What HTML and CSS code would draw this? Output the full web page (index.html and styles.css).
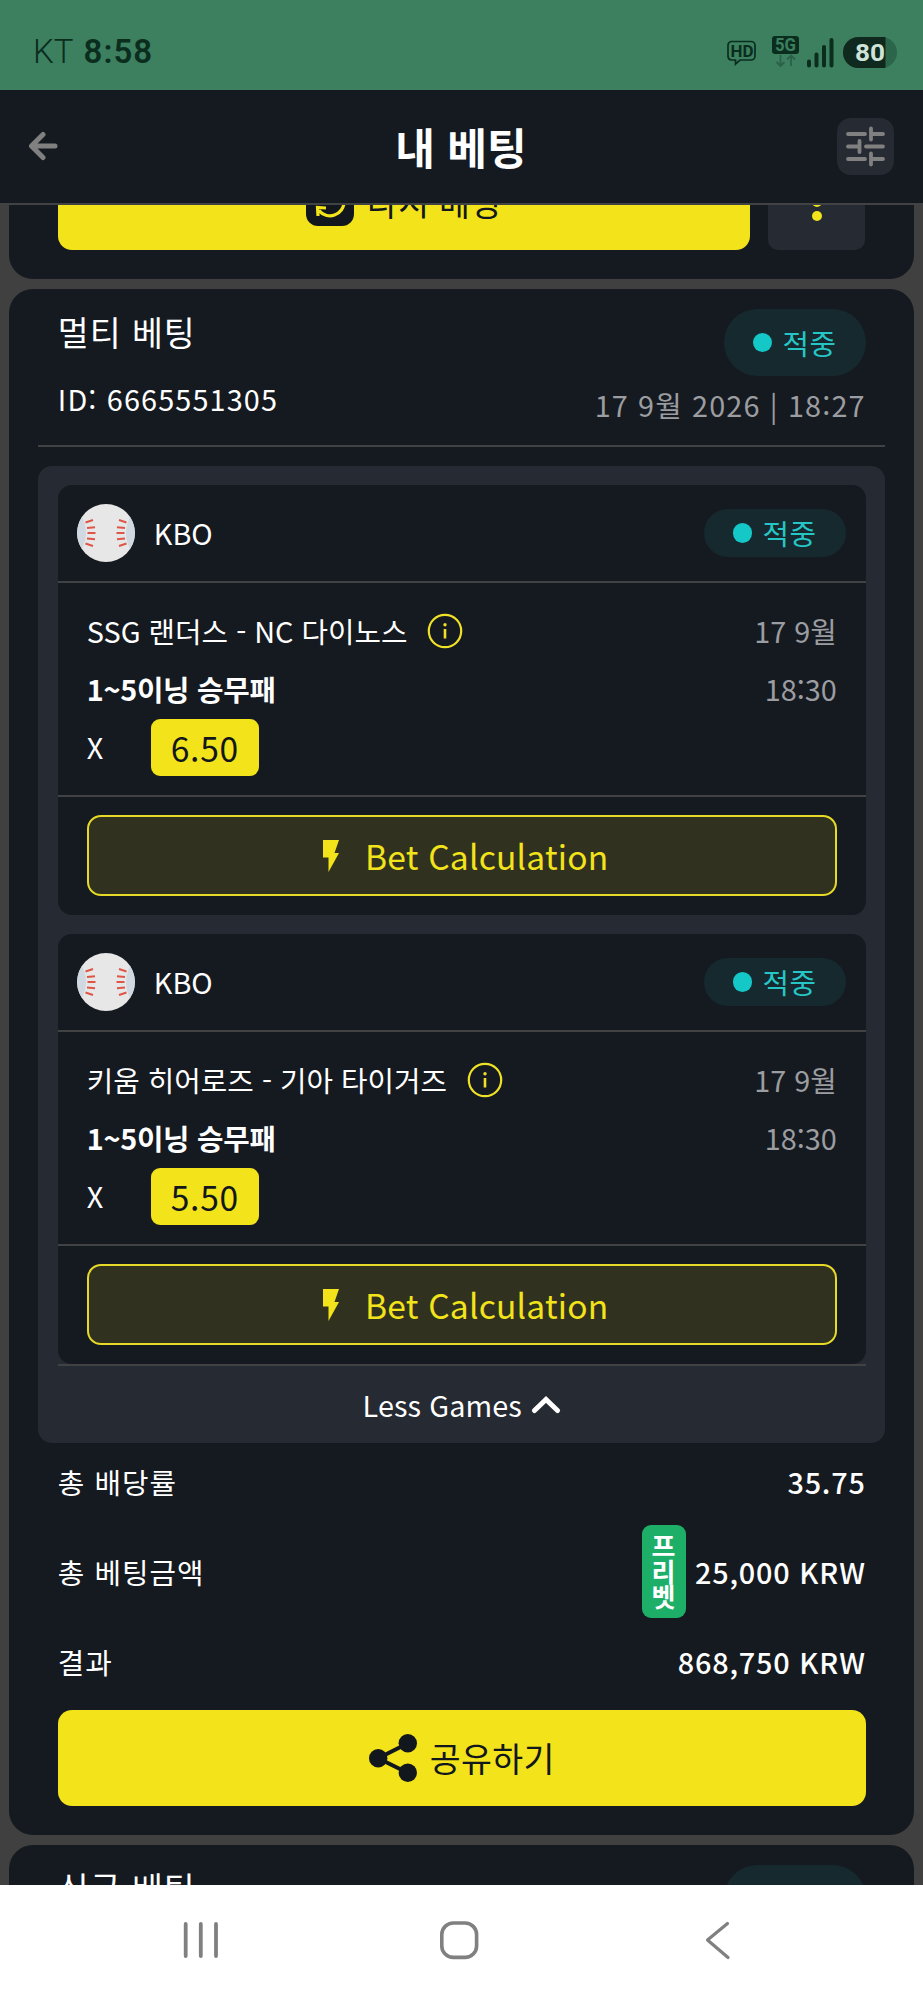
FILE: index.html
```html
<!DOCTYPE html>
<html lang="ko">
<head>
<meta charset="utf-8">
<title>내 베팅</title>
<link rel="stylesheet" href="styles.css">
</head>
<body>
<div class="screen">
  <div class="status">
    <div class="status-left"><span class="carrier">KT</span><span class="clock">8:58</span></div>
    <svg class="status-icons" width="172" height="34" viewBox="0 0 172 34">
      <path d="M4 6.500H24a4 4 0 0 1 4 4V21a4 4 0 0 1-4 4H13l-4.500 4V25H4a4 4 0 0 1-3-4V10.500a4 4 0 0 1 3-4z" fill="none" stroke="#0b2d1e" stroke-width="1.700"/>
      <text x="3.500" y="22" class="hd" textLength="23" lengthAdjust="spacingAndGlyphs">HD</text>
      <rect x="45" y="1" width="27" height="18" rx="3" fill="#0b2d1e"/>
      <text x="48" y="16" class="fiveg" textLength="21" lengthAdjust="spacingAndGlyphs">5G</text>
      <path d="M53.500 20v10.500M49.500 27l4 4 4-4M64 31V21M60 24.500l4-4 4 4" fill="none" stroke="#2a6148" stroke-width="1.800"/>
      <path d="M82 26.500v4M89.500 19.500v11M97 12v18.500M104.500 5v25.500" stroke="#0b2d1e" stroke-width="4" stroke-linecap="round"/>
      <rect x="116" y="2" width="54" height="31" rx="15.500" fill="#2b664a"/>
      <path d="M131.500 2H158.500V33H131.500a15.500 15.500 0 0 1 0-31z" fill="#10291e"/>
      <text x="128" y="25.500" class="battery" textLength="30" lengthAdjust="spacingAndGlyphs">80</text>
    </svg>
  </div>
  <header class="topbar">
    <svg class="back" width="32" height="32" viewBox="0 0 32 32"><path d="M15 4.500 3.500 16 15 27.500M4 16H27" fill="none" stroke="#808080" stroke-width="5" stroke-linecap="round" stroke-linejoin="round"/></svg>
    <h1>내 베팅</h1>
    <div class="filter"><svg width="57" height="57" viewBox="0 0 57 57"><path d="M11 16H28M34 10.500V21.500M34 16H46M11 28.500H22M22.500 23V34M29 28.500H46M11 41H28M34 35.500V46.500M34 41H46" fill="none" stroke="#808080" stroke-width="3.800" stroke-linecap="round"/></svg></div>
  </header>
  <main class="feed">
    <section class="card card-first">
      <div class="actions">
        <div class="btn">
          <svg width="48" height="48" viewBox="0 0 48 48"><rect width="48" height="48" rx="12" fill="#11171c"/><path d="M10 24a14 14 0 0 1 24-9M38 24a14 14 0 0 1-25 8.500M12 38l-.500-8.500 8.500.500M36 10v8h-8" fill="none" stroke="#f2e31b" stroke-width="3.200"/></svg>
          <span>다시 베팅</span>
        </div>
        <div class="more"><i></i><i></i><i></i></div>
      </div>
    </section>

    <section class="card">
      <div class="card-head">
        <div><div class="kind">멀티 베팅</div><div class="bet-id">ID: 6665551305</div></div>
        <div class="head-right"><div class="pill pill-tall"><i></i>적중</div><div class="stamp">17 9월 2026 | 18:27</div></div>
      </div>
      <div class="games">
        <article class="game">
          <div class="league">
            <svg width="58" height="58" viewBox="0 0 58 58"><circle cx="29" cy="29" r="29" fill="#e7e7e7"/><path d="M5 13a29 29 0 0 0 0 32Q13 29 5 13zM53 13a29 29 0 0 1 0 32Q45 29 53 13z" fill="#d0d9e1"/><path d="M8.500 18.500l7.500-2.500M10 24l8-.800M10.500 29H18.500M10 34.500l8 .800M8.500 39.500l7.500 2.500M49.500 18.500l-7.500-2.500M48 24l-8-.800M47.500 29H39.500M48 34.500l-8 .800M49.500 39.500l-7.500 2.500" stroke="#df5548" stroke-width="2"/></svg>
            <span>KBO</span><div class="pill"><i></i>적중</div>
          </div>
          <div class="match">
            <div class="row"><span>SSG 랜더스 - NC 다이노스</span><svg class="info" width="36" height="36" viewBox="0 0 36 36"><circle cx="18" cy="18" r="16.200" fill="none" stroke="#efe126" stroke-width="2.200"/><path d="M18 16v9.500" stroke="#efe126" stroke-width="2.600"/><circle cx="18" cy="11.800" r="1.700" fill="#efe126"/></svg><time>17 9월</time></div>
            <div class="row"><b>1~5이닝 승무패</b><time>18:30</time></div>
            <div class="row"><span class="pick">X</span><span class="odds">6.50</span></div>
          </div>
          <div class="calc"><div class="calc-btn"><svg width="18" height="34" viewBox="0 0 18 34"><path d="M1 1H17L12.500 14H17L6.500 33V18.500H1z" fill="#f2e31b"/></svg><span>Bet Calculation</span></div></div>
        </article>
        <article class="game">
          <div class="league">
            <svg width="58" height="58" viewBox="0 0 58 58"><circle cx="29" cy="29" r="29" fill="#e7e7e7"/><path d="M5 13a29 29 0 0 0 0 32Q13 29 5 13zM53 13a29 29 0 0 1 0 32Q45 29 53 13z" fill="#d0d9e1"/><path d="M8.500 18.500l7.500-2.500M10 24l8-.800M10.500 29H18.500M10 34.500l8 .800M8.500 39.500l7.500 2.500M49.500 18.500l-7.500-2.500M48 24l-8-.800M47.500 29H39.500M48 34.500l-8 .800M49.500 39.500l-7.500 2.500" stroke="#df5548" stroke-width="2"/></svg>
            <span>KBO</span><div class="pill"><i></i>적중</div>
          </div>
          <div class="match">
            <div class="row"><span>키움 히어로즈 - 기아 타이거즈</span><svg class="info" width="36" height="36" viewBox="0 0 36 36"><circle cx="18" cy="18" r="16.200" fill="none" stroke="#efe126" stroke-width="2.200"/><path d="M18 16v9.500" stroke="#efe126" stroke-width="2.600"/><circle cx="18" cy="11.800" r="1.700" fill="#efe126"/></svg><time>17 9월</time></div>
            <div class="row"><b>1~5이닝 승무패</b><time>18:30</time></div>
            <div class="row"><span class="pick">X</span><span class="odds">5.50</span></div>
          </div>
          <div class="calc"><div class="calc-btn"><svg width="18" height="34" viewBox="0 0 18 34"><path d="M1 1H17L12.500 14H17L6.500 33V18.500H1z" fill="#f2e31b"/></svg><span>Bet Calculation</span></div></div>
        </article>
        <div class="less"><span>Less Games</span><svg width="30" height="20" viewBox="0 0 30 20"><path d="M3.500 15.500 15 4.500 26.500 15.500" fill="none" stroke="#fff" stroke-width="5" stroke-linecap="round"/></svg></div>
      </div>
      <div class="totals">
        <div class="total"><span>총 배당률</span><b>35.75</b></div>
        <div class="total total-bet"><span>총 베팅금액</span><div class="free">프리벳</div><b>25,000 KRW</b></div>
        <div class="total"><span>결과</span><b>868,750 KRW</b></div>
      </div>
      <div class="btn share">
        <svg width="48" height="48" viewBox="0 0 48 48"><path d="M39 9.200 9.200 24.300 39 39" fill="none" stroke="#11171c" stroke-width="4"/><circle cx="9.200" cy="24.300" r="9.200" fill="#11171c"/><circle cx="38.800" cy="9.300" r="9.200" fill="#11171c"/><circle cx="38.800" cy="38.800" r="9.200" fill="#11171c"/></svg>
        <span>공유하기</span>
      </div>
    </section>

    <section class="card">
      <div class="card-head">
        <div><div class="kind">싱글 베팅</div></div>
        <div class="head-right"><div class="pill pill-tall"><i></i>적중</div></div>
      </div>
    </section>
  </main>
  <nav class="sysnav">
    <svg width="923" height="115" viewBox="0 0 923 115" fill="none" stroke="#808080" stroke-linecap="round" stroke-linejoin="round"><path d="M185.700 39V71M200.800 39V71M216 39V71" stroke-width="3.800"/><rect x="441.800" y="38" width="34.800" height="34.400" rx="11.500" stroke-width="3.600"/><path d="M727.500 38.500 707.500 55 728 72.500" stroke-width="3.200"/></svg>
  </nav>
</div>
</body>
</html>
```
FILE: styles.css
```css
* { box-sizing: border-box; }
body {
  margin: 0;
  background: #404040;
  color: #fff;
  font-family: "Noto Sans CJK KR", "Noto Sans", sans-serif;
  font-size: 28.8px;
}
svg { display: block; flex: none; }
.screen { display: flex; flex-direction: column; width: 923px; height: 2000px; overflow: hidden; }

.status {
  display: flex; align-items: center; justify-content: space-between;
  height: 89.5px; flex: none; padding: 14px 24px 0 33px;
  background: #3c8060; color: #0b2d1e;
  font-family: Roboto, sans-serif; font-size: 33px;
}
.status-left { display: flex; gap: 10px; }
.carrier { font-weight: 300; }
.clock { font-weight: 600; letter-spacing: 1px; }
.status-icons { font-family: Roboto, sans-serif; font-weight: 700; }
.hd { font-size: 17px; fill: #0b2d1e; }
.fiveg { font-size: 18px; fill: #3c8060; }
.battery { font-size: 24px; fill: #cfe3d9; }

.topbar {
  display: flex; align-items: center; justify-content: space-between;
  height: 115.5px; flex: none; padding: 0 29px 0 28px;
  background: #151a20; border-bottom: 2px solid #404244;
}
.back { margin-right: 25px; }
.topbar h1 { margin: 0; font-size: 43.2px; font-weight: 700; line-height: 60px; }
.filter { border-radius: 14px; background: #262a32; }

.feed { flex: 1; min-height: 0; overflow: hidden; padding: 0 9.3px; }
.card { padding: 20px 29px 29px; margin-bottom: 10px; border-radius: 24px; background: #151a20; }
.card-first { margin-top: -51.5px; padding-top: 0; }
.actions { display: flex; gap: 18.5px; padding: 0 19.3px; }
.btn {
  display: flex; align-items: center; justify-content: center; gap: 13px;
  flex: 1; height: 96.5px; border-radius: 14px;
  background: #f2e31b; color: #11171c; font-size: 33.6px; letter-spacing: .3px;
}
.more { display: flex; flex-direction: column; align-items: center; justify-content: center; gap: 4.500px; width: 97px; border-radius: 10px; background: #262a32; }
.more i { width: 10px; height: 10px; border-radius: 50%; background: #f2e31b; }

.card-head {
  display: flex; justify-content: space-between;
  height: 138px; padding: 0 19px 0 19.5px; border-bottom: 2px solid #404244;
}
.kind { font-size: 33.6px; line-height: 46px; letter-spacing: 1px; }
.bet-id { margin-top: 20px; line-height: 48px; letter-spacing: 1.15px; }
.head-right { display: flex; flex-direction: column; align-items: flex-end; gap: 9px; }
.stamp { line-height: 40px; letter-spacing: 1.15px; color: #9c9da0; }
.pill {
  display: flex; align-items: center; justify-content: center; gap: 10px;
  width: 142px; height: 48px; border-radius: 34px;
  background: #15292e; color: #26c6c6; line-height: 40px; letter-spacing: .5px;
}
.pill i { width: 19.500px; height: 19.500px; border-radius: 50%; background: #14c8c8; }
.pill-tall { height: 67px; }

.games { margin-top: 19px; padding: 19px 19px 0 19.5px; height: 976.5px; border-radius: 14px; background: #262a32; }
.game { height: 430px; border-radius: 14px; background: #151a20; }
.game + .game { margin-top: 19px; }
.league { display: flex; align-items: center; height: 98px; padding: 0 20px 0 19px; border-bottom: 2px solid #404244; }
.league span { margin-left: 19px; flex: 1; line-height: 40px; }
.match { height: 212px; padding: 19px 29px 0; }
.match b { letter-spacing: -.3px; }
.row { display: flex; align-items: center; height: 58px; line-height: 40px; }
.row time { margin-left: auto; color: #9c9da0; }
.info { margin-left: 20px; }
.pick { width: 64px; }
.odds { width: 108px; height: 57px; border-radius: 9px; background: #f2e31b; color: #11171c; font-size: 33.6px; line-height: 57px; text-align: center; letter-spacing: .7px; }
.calc { height: 120px; padding: 18px 29px 0; border-top: 2px solid #404244; }
.calc-btn {
  display: flex; align-items: center; justify-content: center; gap: 25px;
  height: 81px; padding-left: 7px; border: 2px solid #e6d928; border-radius: 14px;
  background: #30321f; color: #f2e31b; font-size: 33.6px; line-height: 48px; letter-spacing: .2px;
}
.less { display: flex; align-items: center; justify-content: center; gap: 9px; height: 79px; border-top: 2px solid #404244; line-height: 40px; letter-spacing: .1px; }

.totals { padding: 0 19px 0 19.5px; }
.total { display: flex; align-items: center; height: 77px; }
.total b { font-weight: 500; letter-spacing: .8px; }
.total span { flex: 1; letter-spacing: 1.05px; }
.total-bet { height: 103px; }
.free {
  width: 44.500px; height: 93px; margin-right: 9px; padding: 7.5px 10px;
  border-radius: 9px; background: #1dae68;
  font-size: 26px; font-weight: 700; line-height: 25.500px; word-break: break-all;
}
.share { margin: 10px 19px 0 19.5px; }

.sysnav { height: 115.5px; flex: none; background: #fff; }
```
